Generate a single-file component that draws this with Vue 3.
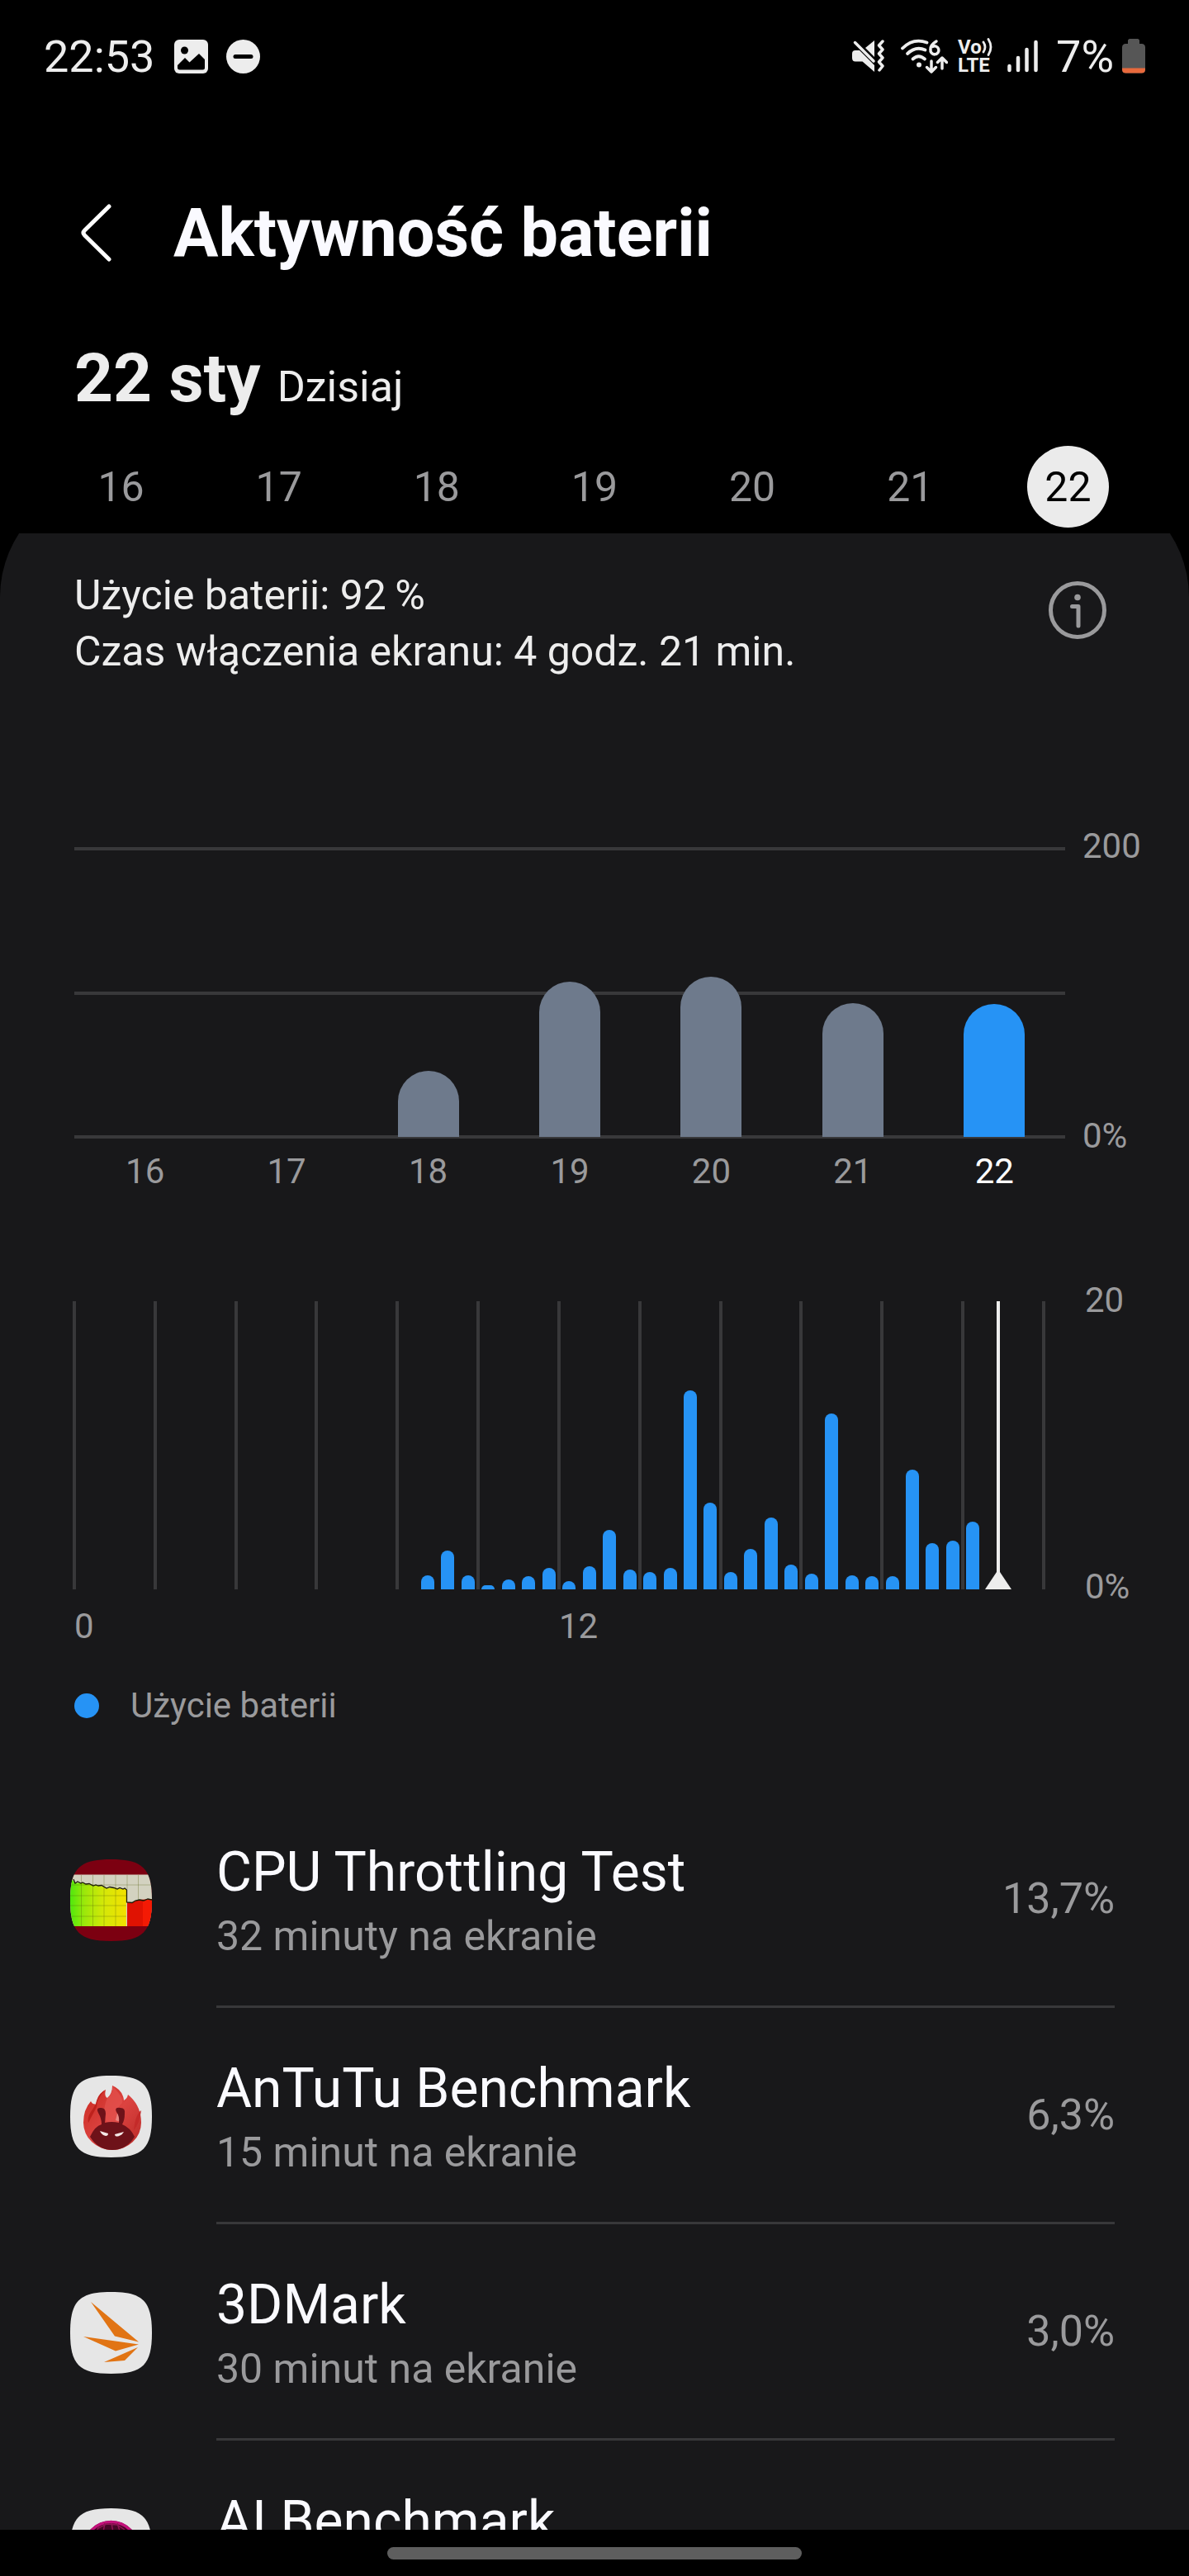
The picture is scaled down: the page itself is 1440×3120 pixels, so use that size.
<template>
  <div class="screen">
    <!-- Pasek stanu -->
    <div class="status-bar">
      <span class="status-text">22:53</span>
      <svg class="status-picture" viewBox="0 0 41 41" aria-hidden="true">
        <rect width="41" height="41" rx="6" fill="#ededed" />
        <circle cx="12.500" cy="13" r="4.500" fill="#000" />
        <path d="M4 34V31L13 22L18.500 27.500L30 17L37 24V34Q37 36.500 34.500 36.500H6.500Q4 36.500 4 34Z" fill="#000" />
      </svg>
      <svg class="status-dnd" viewBox="0 0 41 41" aria-hidden="true">
        <circle cx="20.500" cy="20.500" r="20.500" fill="#ededed" />
        <rect x="8.500" y="18" width="24" height="5" rx="2.500" fill="#000" />
      </svg>

      <div class="status-right">
        <svg class="status-mute" viewBox="0 0 40 40" aria-hidden="true">
          <g fill="#ededed">
            <path d="M4 13H9L27 31V39L12.500 26.500H4Q0 26.500 0 22V17Q0 13 4 13Z" />
            <path d="M27 1V21L16 10Z" />
          </g>
          <path d="M3.500 3.500L26 26" stroke="#ededed" stroke-width="3.500" stroke-linecap="round" />
          <path d="M37 2L32.500 7L37 12L32.500 17L37 22L32.500 27L37 32L33 37" fill="none" stroke="#ededed" stroke-width="3.500" stroke-linejoin="round" stroke-linecap="round" />
        </svg>
        <svg class="status-wifi" viewBox="0 0 57 43" aria-hidden="true">
          <g fill="none" stroke="#ededed" stroke-width="3.800" stroke-linecap="round" stroke-linejoin="round">
            <path d="M2 11.500Q15 -1.500 31.500 4.500" />
            <path d="M8 18Q18 8.500 29.500 13.500" />
            <path d="M14.500 24.500Q21.500 18 29 24.500" />
            <path d="M43 3Q35 8 36 13A5 5 0 1 0 38.500 9.500" stroke-width="3.500" />
            <path d="M37 27V39.500M31.500 34.500L37 40L42.500 34.500" stroke-width="3.500" />
            <path d="M50 36V23.500M44.500 28.500L50 23L55.500 28.500" stroke-width="3.500" />
          </g>
          <circle cx="22" cy="31.500" r="3" fill="#ededed" />
        </svg>
        <span class="volte">
          <span class="volte-line">Vo<svg class="volte-waves" viewBox="0 0 14 22" aria-hidden="true">
            <path d="M2 5Q6 11 2 17M8 1.500Q14 11 8 20.500" fill="none" stroke="#ededed" stroke-width="2.800" stroke-linecap="round" />
          </svg></span>
          <span class="volte-line">LTE</span>
        </span>
        <svg class="status-signal" viewBox="0 0 37 40" aria-hidden="true">
          <path d="M2.500 32V37M13 22V37M23.500 12V37M34.500 3V37" stroke="#ededed" stroke-width="4.500" stroke-linecap="round" />
        </svg>
        <span class="status-text">7%</span>
        <svg class="status-battery" viewBox="0 0 28 42" aria-hidden="true">
          <path d="M7 6V2.500Q7 0 9.500 0H18.500Q21 0 21 2.500V6H23.500Q28 6 28 10.500V37Q28 41.500 23.500 41.500H4.500Q0 41.500 0 37V10.500Q0 6 4.500 6Z" fill="#565656" />
          <path d="M0 35.500H28V37Q28 41.500 23.500 41.500H4.500Q0 41.500 0 37Z" fill="#e8693c" />
        </svg>
      </div>
    </div>

    <header class="title-bar">
      <button class="back" type="button" aria-label="Wstecz">
        <svg viewBox="0 0 40 72" aria-hidden="true">
          <path d="M36 4L6.500 33Q3.500 36 6.500 39L36 68" fill="none" stroke="#fff" stroke-width="5" stroke-linecap="round" />
        </svg>
      </button>
      <h1>Aktywność baterii</h1>
    </header>

    <p class="date"><strong>22 sty</strong> <span>Dzisiaj</span></p>

    <!-- Wybór dnia -->
    <nav class="days">
      <button
        v-for="item in days"
        :key="item.day"
        type="button"
        class="day"
        :class="{ selected: item.day === selected }"
        @click="selected = item.day"
      >
        {{ item.day }}
      </button>
    </nav>

    <main class="panel">
      <section class="summary">
        <p>Użycie baterii: 92&thinsp;%<br />Czas włączenia ekranu: 4 godz. 21 min.</p>
        <button class="info" type="button" aria-label="Informacje">
          <svg viewBox="0 0 70 70" aria-hidden="true">
            <circle cx="35" cy="35" r="32.500" fill="none" stroke="#9a9a9c" stroke-width="5" />
            <circle cx="35" cy="19.500" r="3.800" fill="#9a9a9c" />
            <path d="M28.500 30.500H36V54" fill="none" stroke="#9a9a9c" stroke-width="5" stroke-linecap="round" stroke-linejoin="round" />
          </svg>
        </button>
      </section>

      <!-- Wykres tygodniowy -->
      <section class="chart weekly">
        <div class="plot">
          <div class="grid-rows"><i></i><i></i><i></i></div>
          <div class="week-bars">
            <div v-for="item in days" :key="item.day" class="week-slot">
              <div
                v-if="item.usage"
                class="week-bar"
                :class="{ active: item.day === selected }"
                :style="{ height: (item.usage / 200) * 100 + '%' }"
              ></div>
            </div>
          </div>
        </div>
        <div class="axis"><span>200</span><span>0%</span></div>
        <div class="week-labels">
          <span v-for="item in days" :key="item.day" :class="{ active: item.day === selected }">{{ item.day }}</span>
        </div>
      </section>

      <!-- Wykres dobowy, słupek co pół godziny -->
      <section class="chart daily">
        <div class="plot">
          <div class="grid-columns"><i v-for="n in 13" :key="n"></i></div>
          <div class="day-bars">
            <div v-for="(value, index) in halfHours" :key="index" class="day-slot">
              <div v-if="value" class="day-bar" :style="{ height: (value / 20) * 100 + '%' }"></div>
            </div>
          </div>
          <div class="now" :style="{ left: nowPosition + '%' }"></div>
        </div>
        <div class="axis"><span>20</span><span>0%</span></div>
        <div class="hour-labels"><span>0</span><span>12</span></div>
      </section>

      <div class="legend"><i></i><span>Użycie baterii</span></div>

      <ul class="apps">
        <li v-for="app in apps" :key="app.name" class="app">
          <svg class="app-icon" viewBox="0 0 99 99" aria-hidden="true">
            <defs>
              <clipPath :id="'mask-' + app.icon">
                <path :d="squircle" />
              </clipPath>
              <linearGradient id="heat">
                <stop offset="0" stop-color="#4fe80c" />
                <stop offset="0.250" stop-color="#9be80a" />
                <stop offset="0.600" stop-color="#d5e808" />
                <stop offset="1" stop-color="#f2e000" />
              </linearGradient>
              <linearGradient id="flame" x1="0" y1="0" x2="1" y2="1">
                <stop offset="0" stop-color="#c9281f" />
                <stop offset="0.500" stop-color="#dc4340" />
                <stop offset="1" stop-color="#b92a27" />
              </linearGradient>
            </defs>
            <g :clip-path="`url(#mask-${app.icon})`">
              <template v-if="app.icon === 'cpu'">
                <rect width="99" height="99" fill="#7c0011" />
                <rect y="18.500" width="99" height="62.500" fill="#d3d2c0" />
                <path d="M0 23L3 25L6 29L14 28L20 30L30 31L40 33L46 35L54 34L62 36L68 36V81H0Z" fill="url(#heat)" />
                <path d="M69 52L75 52L82 49L99 48V81H69Z" fill="#e01202" />
                <path d="M88 49H99V81H88Z" fill="#f41a04" />
                <path d="M13.500 19V81M27.500 19V81M41 19V81M55 19V81M69 19V36M82.500 19V50M0 31H99M0 44H68M0 56H68M0 69H68" stroke="#55600c" stroke-opacity="0.400" stroke-width="0.800" />
                <path d="M4 24L6 29L9 27L13 29L15 28L19 30L23 29.500L28 32L31 31L34 32L38 31.500L44 35L48 33.500L53 34.500L57 36L60 34.500L64 36L66 35L68.500 37V52L75 52.500L79 50L84 49L89 50L94 48L99 49" fill="none" stroke="#1c1c08" stroke-width="1.300" />
              </template>
              <template v-else-if="app.icon === 'antutu'">
                <rect width="99" height="99" fill="#e6e6e6" />
                <path d="M25 31Q27 35 31 34.500Q33 22 43 17Q41 25 45 27Q51 22 51 12Q61 16 64 25Q65 28 65 30Q69 28 70 23Q86 36 86 57A35 33 0 0 1 16 57Q16 41 25 31Z" fill="url(#flame)" />
                <path d="M43 17Q32 27 32 38L22 57Q20 50 27 41L31 34.500Q34 22 43 17Z" fill="#bd211c" />
                <path d="M45 27Q38 43 44 57L62 59Q52 42 63 33Q65 27 51 12Q52 23 45 27Z" fill="#e4534e" opacity="0.700" />
                <path d="M86 42Q79 47 77 66Q84 58 86 42Z" fill="#c42a29" />
                <path d="M55 54L58 42L61 56Z" fill="#e98883" />
                <path d="M24 74Q30 61 38 59Q38 52 34 45Q31 39 36 39Q43 38 43 46L42 57Q50 55 59 57Q60 49 56 44Q53 38 61 39Q67 39 66 46Q66 54 63 59Q73 63 78 74Q68 90 51 90Q34 90 24 74Z" fill="#6e1219" />
                <path d="M36 67L46 70Q46 73 43 73Q38 72 36 67ZM65 68L54 71Q54 74 58 73.500Q63 72 65 68Z" fill="#f4e8e6" />
              </template>
              <template v-else-if="app.icon === '3dmark'">
                <rect width="99" height="99" fill="#e6e6e6" />
                <path d="M25 12L83 60.500L54 53.500ZM16 54L83 63.500L55 71.500ZM82 67L66 83L41 85Z" fill="#e17414" />
              </template>
              <template v-else>
                <rect width="99" height="99" fill="#e6e6e6" />
                <circle cx="49.500" cy="49" r="34" fill="#450627" />
                <circle cx="49.500" cy="49" r="32.500" fill="none" stroke="#c2107a" stroke-width="3.500" />
                <path d="M34 22L30 40M42 18L38 40M50 18L54 40M57 18L64 40M34 24L44 19L57 20L66 26" fill="none" stroke="#8d1453" stroke-width="1.500" />
              </template>
            </g>
          </svg>
          <div class="app-body">
            <div class="app-text">
              <div class="app-name">{{ app.name }}</div>
              <div v-if="app.time" class="app-time">{{ app.time }}</div>
            </div>
            <span v-if="app.share" class="app-share">{{ app.share }}</span>
          </div>
        </li>
      </ul>
    </main>

    <footer class="nav-bar"><i></i></footer>
  </div>
</template>

<script setup>
import { ref } from 'vue'

const selected = ref(22)

// Zużycie baterii w kolejnych dniach (%)
const days = [
  { day: 16, usage: 0 },
  { day: 17, usage: 0 },
  { day: 18, usage: 46 },
  { day: 19, usage: 108 },
  { day: 20, usage: 111 },
  { day: 21, usage: 93 },
  { day: 22, usage: 92 }
]

// Zużycie od północy, po jednej wartości na pół godziny
const halfHours = [
  ...Array(17).fill(0),
  1, 2.7, 1, 0.3, 0.7, 0.9, 1.5, 0.6, 1.6, 4.1, 1.4, 1.2, 1.5, 13.8,
  6, 1.2, 2.8, 5, 1.7, 1.1, 12.2, 1, 0.9, 0.9, 8.3, 3.2, 3.4, 4.7,
  0, 0, 0
]

// 22:53 jako część doby
const nowPosition = ((22 * 60 + 53) / 1440) * 100

const squircle = 'M49.500 0C88 0 99 11 99 49.500S88 99 49.500 99S0 88 0 49.500S11 0 49.500 0Z'

const apps = [
  { name: 'CPU Throttling Test', time: '32 minuty na ekranie', share: '13,7%', icon: 'cpu' },
  { name: 'AnTuTu Benchmark', time: '15 minut na ekranie', share: '6,3%', icon: 'antutu' },
  { name: '3DMark', time: '30 minut na ekranie', share: '3,0%', icon: '3dmark' },
  { name: 'AI Benchmark', icon: 'ai' }
]
</script>

<style>
body {
  margin: 0;
  background: #000;
}
</style>

<style scoped>
.screen {
  display: flex;
  flex-direction: column;
  height: 100vh;
  overflow: hidden;
  background: #000;
  color: #ededed;
  font-family: Roboto, "Noto Sans", sans-serif;
  font-size: 50px;
}

button {
  padding: 0;
  border: none;
  background: none;
  color: inherit;
  font: inherit;
  cursor: pointer;
}

svg {
  display: block;
  flex: none;
}

/* Pasek stanu */
.status-bar {
  display: flex;
  align-items: center;
  flex: none;
  height: 136px;
  padding: 0 53px;
}

.status-text {
  font-size: 54px;
}

.status-picture {
  width: 41px;
  height: 41px;
  margin-left: 24px;
}

.status-dnd {
  width: 41px;
  height: 41px;
  margin-left: 22px;
}

.status-right {
  display: flex;
  align-items: center;
  margin-left: auto;
}

.status-mute {
  width: 40px;
  height: 40px;
  margin-right: 19px;
}

.status-wifi {
  width: 57px;
  height: 43px;
  margin-right: 12px;
}

.volte {
  width: 42px;
  margin-right: 18px;
  font-size: 24px;
  font-weight: 700;
  line-height: 22px;
}

.volte-line {
  display: flex;
  align-items: center;
}

.volte-waves {
  width: 14px;
  height: 22px;
}

.status-signal {
  width: 37px;
  height: 40px;
  margin-right: 22px;
}

.status-battery {
  width: 28px;
  height: 42px;
  margin-left: 10px;
}

/* Nagłówek */
.title-bar {
  display: flex;
  align-items: center;
  flex: none;
  height: 160px;
  margin-top: 66px;
  padding-left: 96px;
  color: #fafaff;
}

.back svg {
  width: 40px;
  height: 72px;
}

h1 {
  margin: 0 0 0 74px;
  font-size: 81px;
  font-weight: 700;
}

.date {
  display: flex;
  align-items: baseline;
  gap: 20px;
  flex: none;
  height: 100px;
  margin: 46px 90px 0;
  line-height: 100px;
}

.date strong {
  font-size: 82px;
}

.date span {
  font-size: 52px;
}

.days {
  display: flex;
  justify-content: space-between;
  flex: none;
  margin: 32px 97px 7px;
}

.day {
  width: 99px;
  height: 99px;
  border-radius: 50%;
  color: #9a9a9c;
}

.day.selected {
  background: #ebebeb;
  color: #000;
}

/* Panel */
.panel {
  position: relative;
  z-index: 0;
  flex: 1;
  min-height: 0;
  overflow: hidden;
}

/* Tło o dużym promieniu, przycięte u góry krawędzią panelu */
.panel::before {
  content: "";
  position: absolute;
  inset: -63px 0 0;
  z-index: -1;
  border-radius: 140px 140px 0 0;
  background: #18181a;
}

.summary {
  display: flex;
  justify-content: space-between;
  align-items: flex-start;
  padding: 41px 100px 0 90px;
  line-height: 68px;
}

.summary p {
  margin: 0;
}

.info {
  margin-top: 17px;
}

.info svg {
  width: 70px;
  height: 70px;
}

/* Wykresy */
.chart {
  display: grid;
  margin-left: 90px;
  color: #9a9a9c;
  font-size: 42px;
  line-height: 50px;
}

.plot {
  position: relative;
}

.axis {
  display: flex;
  flex-direction: column;
  justify-content: space-between;
  margin: -26px 0 -22px;
}

.weekly {
  grid-template-columns: 1fr 129px;
  column-gap: 21px;
  row-gap: 15px;
  margin-top: 203px;
}

.weekly .plot {
  height: 353px;
}

.grid-rows {
  position: absolute;
  inset: 0;
  display: flex;
  flex-direction: column;
  justify-content: space-between;
}

.grid-rows i {
  height: 4px;
  background: #38383a;
}

.week-bars {
  position: relative;
  display: grid;
  grid-template-columns: repeat(7, 1fr);
  height: 349px;
  padding-top: 2px;
}

.week-slot {
  display: flex;
  justify-content: center;
  align-items: flex-end;
}

.week-bar {
  width: 74px;
  border-radius: 37px 37px 0 0;
  background: #6e7a8c;
}

.week-bar.active {
  background: #2693f5;
}

.week-labels {
  display: grid;
  grid-template-columns: repeat(7, 1fr);
  text-align: center;
}

.week-labels .active {
  color: #fff;
}

.daily {
  grid-template-columns: 1fr 126px;
  column-gap: 50px;
  row-gap: 20px;
  margin-top: 132px;
}

.daily .plot {
  height: 349px;
}

.grid-columns {
  position: absolute;
  inset: 0 -2px;
  display: flex;
  justify-content: space-between;
}

.grid-columns i {
  width: 4px;
  background: #38383a;
}

.day-bars {
  position: relative;
  display: grid;
  grid-template-columns: repeat(48, 1fr);
  height: 100%;
}

.day-slot {
  display: flex;
  justify-content: center;
  align-items: flex-end;
}

.day-bar {
  width: 16px;
  border-radius: 8px 8px 0 0;
  background: #2693f5;
}

.now {
  position: absolute;
  top: 0;
  bottom: 0;
  width: 32px;
  transform: translateX(-50%);
  background: linear-gradient(#ededed, #ededed) center / 4px 100% no-repeat;
}

.now::after {
  content: "";
  position: absolute;
  bottom: 0;
  left: 0;
  border: 16px solid transparent;
  border-top: none;
  border-bottom: 24px solid #ededed;
}

.hour-labels {
  display: grid;
  grid-template-columns: 1fr 1fr;
}

.legend {
  display: flex;
  align-items: center;
  gap: 38px;
  margin: 46px 90px 0;
  color: #9a9a9c;
  font-size: 42px;
  line-height: 50px;
}

.legend i {
  width: 30px;
  height: 30px;
  border-radius: 50%;
  background: #2693f5;
}

/* Lista aplikacji */
.apps {
  margin: 79px 0 0;
  padding: 0;
  list-style: none;
}

.app {
  display: flex;
  align-items: center;
  gap: 78px;
  height: 262px;
  padding: 0 90px 0 85px;
}

.app-icon {
  width: 99px;
  height: 99px;
}

.app-body {
  display: flex;
  align-items: center;
  flex: 1;
  box-sizing: border-box;
  height: 100%;
  border-bottom: 3px solid #38383a;
}

.app-text {
  flex: 1;
  min-height: 154px;
  padding-top: 10px;
}

.app-name {
  color: #fafaff;
  font-size: 66px;
  line-height: 80px;
}

.app-time {
  color: #9a9a9c;
  line-height: 74px;
}

.app-share {
  color: #9a9a9c;
  font-size: 52px;
}

/* Pasek gestów */
.nav-bar {
  display: flex;
  justify-content: center;
  align-items: center;
  flex: none;
  height: 56px;
}

.nav-bar i {
  width: 502px;
  height: 15px;
  border-radius: 8px;
  background: #5e5e5e;
}
</style>
